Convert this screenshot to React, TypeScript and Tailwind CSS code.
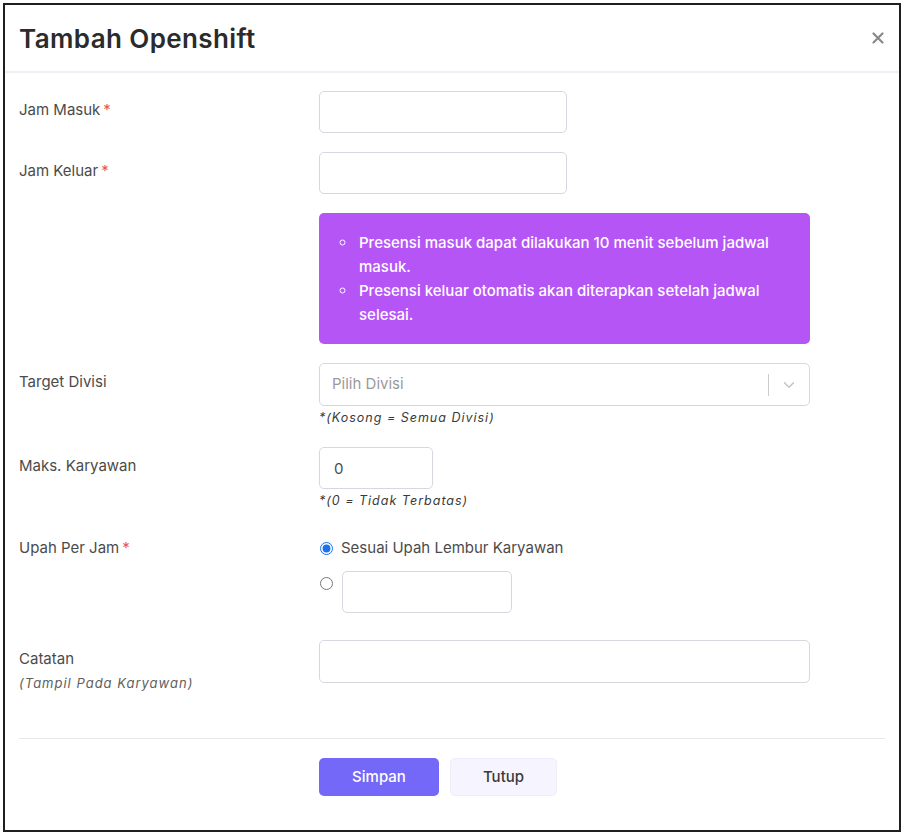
import { ChevronDown } from "lucide-react";

const font = { fontFamily: "Inter, 'Noto Sans', sans-serif" };

function Label({ text, required, note }: { text: string; required?: boolean; note?: string }) {
  return (
    <div className="pt-[9px] text-[15px] leading-[20px] text-[#4b4b4b]">
      {text}
      {required && <span className="ml-[3px] text-[#ea5455]">*</span>}
      {note && (
        <div className="mt-[4px] text-[13px] italic tracking-[1px] text-[#5e5e5e]">{note}</div>
      )}
    </div>
  );
}

function Hint({ children }: { children: string }) {
  return (
    <div className="mt-[3px] text-[12.5px] italic leading-[18px] tracking-[1px] text-[#3a3a3a]">
      {children}
    </div>
  );
}

const inputCls =
  "h-[42px] rounded-[5px] border border-[#d8d6de] bg-white px-[14px] text-[15px] text-[#4b4b4b] outline-none";

export default function App() {
  return (
    <div className="min-h-screen bg-white p-[3px]" style={font}>
      <div className="flex h-[829px] flex-col border-2 border-[#1f1f1f] bg-white">
        <div className="flex h-[68px] shrink-0 items-center justify-between border-b-2 border-[#edf1f5] pl-[14px] pr-[15px]">
          <h1 className="text-[26px] font-semibold tracking-[0.4px] text-[#2b2b2b]">Tambah Openshift</h1>
          <svg width="12" height="12" viewBox="0 0 12 12" className="text-[#8a8a8a]">
            <path d="M1.5 1.5 L10.5 10.5 M10.5 1.5 L1.5 10.5" stroke="currentColor" strokeWidth="2.2" strokeLinecap="round" />
          </svg>
        </div>

        <div className="flex flex-1 flex-col px-[14px] pt-[18px]">
          <div className="grid grid-cols-[300px_491px] gap-y-[19px]">
            <Label text="Jam Masuk" required />
            <input className={`${inputCls} w-[248px]`} />

            <Label text="Jam Keluar" required />
            <input className={`${inputCls} w-[248px]`} />

            <div />
            <div className="rounded-[5px] bg-[#b655f5] pt-[18px] pb-[17px] pl-[36px] pr-[20px] text-[15px] font-medium leading-[24px] text-white">
              <ul className="list-[circle] pl-[2px]">
                <li className="pl-[2px]">Presensi masuk dapat dilakukan 10 menit sebelum jadwal masuk.</li>
                <li className="pl-[2px]">Presensi keluar otomatis akan diterapkan setelah jadwal selesai.</li>
              </ul>
            </div>

            <Label text="Target Divisi" />
            <div className="mb-[1px]">
              <div className="flex h-[43px] items-center rounded-[5px] border border-[#d8d6de] bg-white">
                <span className="flex-1 pl-[12px] text-[15px] text-[#9a9a9a]">Pilih Divisi</span>
                <span className="h-[22px] w-px bg-[#cccccc]" />
                <span className="flex w-[40px] items-center justify-center">
                  <ChevronDown size={18} strokeWidth={1.8} className="text-[#c2c2c2]" />
                </span>
              </div>
              <Hint>*(Kosong = Semua Divisi)</Hint>
            </div>

            <Label text="Maks. Karyawan" />
            <div>
              <input className={`${inputCls} w-[114px]`} defaultValue="0" />
              <Hint>*(0 = Tidak Terbatas)</Hint>
            </div>

            <Label text="Upah Per Jam" required />
            <div className="mt-[8px] mb-[8px]">
              <label className="flex items-center gap-[8px] pl-[1px] text-[15px] leading-[22px] text-[#4b4b4b]">
                <input type="radio" name="upah" defaultChecked className="m-0 h-[13px] w-[13px] accent-[#1a73e8]" />
                Sesuai Upah Lembur Karyawan
              </label>
              <div className="mt-[12px] flex items-start gap-[9px] pl-[1px]">
                <input type="radio" name="upah" className="m-0 mt-[6px] h-[13px] w-[13px]" />
                <input className={`${inputCls} w-[170px]`} />
              </div>
            </div>

            <Label text="Catatan" note="(Tampil Pada Karyawan)" />
            <input className={`${inputCls} h-[43px] w-[491px]`} />
          </div>

          <div className="mt-[45px] border-t border-[#e8e8e8]" />
          <div className="mt-[19px] flex gap-[11px] pl-[300px]">
            <button className="h-[38px] w-[120px] rounded-[5px] bg-[#7468f8] text-[15px] font-medium text-white">Simpan</button>
            <button className="h-[38px] w-[107px] rounded-[5px] border border-[#eeedfb] bg-[#f6f5ff] text-[15px] font-medium text-[#3a3a3a]">
              Tutup
            </button>
          </div>
        </div>
      </div>
    </div>
  );
}
